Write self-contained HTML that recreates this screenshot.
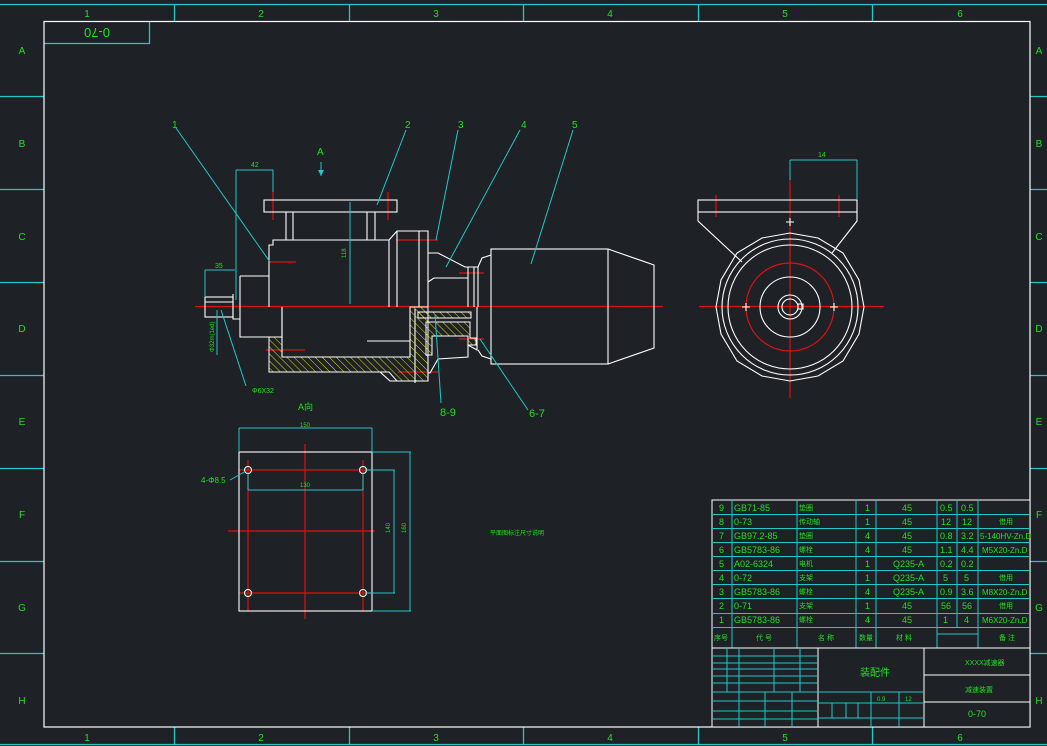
<!DOCTYPE html>
<html><head><meta charset="utf-8"><style>
html,body{margin:0;padding:0;background:#1e2126;}
svg{display:block}
text{font-family:"Liberation Sans","Noto Sans CJK SC",sans-serif;fill:#22e022;}
</style></head><body>
<svg width="1047" height="746" viewBox="0 0 1047 746" xmlns="http://www.w3.org/2000/svg">
<rect width="1047" height="746" fill="#1e2126"/>
<!-- outer cyan frame -->
<g stroke="#22c8c8" stroke-width="1.3" fill="none">
<line x1="0" y1="4.5" x2="1047" y2="4.5"/>
<line x1="0" y1="744.5" x2="1047" y2="744.5"/>
<path d="M174.5 4V21M349.5 4V21M523.5 4V21M698.5 4V21M872.5 4V21"/>
<path d="M174.5 727V745M349.5 727V745M523.5 727V745M698.5 727V745M872.5 727V745"/>
<path d="M0 96.5H44M0 189.5H44M0 282.5H44M0 375.5H44M0 468.5H44M0 561.5H44M0 653.5H44"/>
<path d="M1030 96.5H1047M1030 189.5H1047M1030 282.5H1047M1030 375.5H1047M1030 468.5H1047M1030 561.5H1047M1030 653.5H1047"/>
<path d="M44 43.5H149.5V21"/>
</g>
<rect x="44" y="21.5" width="986" height="705.5" fill="none" stroke="#fff" stroke-width="1.2"/>
<g font-size="10" text-anchor="middle">
<text x="87" y="17">1</text><text x="261" y="17">2</text><text x="436" y="17">3</text><text x="610" y="17">4</text><text x="785" y="17">5</text><text x="960" y="17">6</text>
<text x="87" y="741">1</text><text x="261" y="741">2</text><text x="436" y="741">3</text><text x="610" y="741">4</text><text x="785" y="741">5</text><text x="960" y="741">6</text>
<text x="22" y="54">A</text><text x="22" y="147">B</text><text x="22" y="240">C</text><text x="22" y="332">D</text><text x="22" y="425">E</text><text x="22" y="518">F</text><text x="22" y="611">G</text><text x="22" y="704">H</text>
<text x="1039" y="54">A</text><text x="1039" y="147">B</text><text x="1039" y="240">C</text><text x="1039" y="332">D</text><text x="1039" y="425">E</text><text x="1039" y="518">F</text><text x="1039" y="611">G</text><text x="1039" y="704">H</text>
<text x="97" y="38" font-size="13" transform="rotate(180 97 33)">0-70</text>
</g>

<!-- centerlines -->
<g stroke="#e01010" stroke-width="1.2">
<line x1="195" y1="306.5" x2="663" y2="306.5"/>
<line x1="270" y1="262" x2="296" y2="262"/>
<line x1="266" y1="350" x2="305" y2="350"/>
<line x1="273" y1="192" x2="273" y2="220"/><line x1="388" y1="192" x2="388" y2="220"/>
<line x1="396" y1="240" x2="438" y2="240"/>
<line x1="459" y1="273" x2="484" y2="273"/>
<line x1="459" y1="339" x2="484" y2="339"/>
<line x1="398" y1="372" x2="438" y2="372"/>
<!-- right view -->
<line x1="790" y1="180" x2="790" y2="398"/>
<line x1="699" y1="306.5" x2="884" y2="306.5"/>
<line x1="716" y1="195" x2="716" y2="217"/><line x1="839" y1="195" x2="839" y2="217"/>
<!-- A view -->
<line x1="248" y1="460" x2="248" y2="611"/><line x1="363" y1="460" x2="363" y2="611"/>
<line x1="239" y1="470" x2="372" y2="470"/><line x1="239" y1="593" x2="372" y2="593"/>
<line x1="305" y1="444" x2="305" y2="619"/><line x1="228" y1="531" x2="375" y2="531"/>
</g>
<circle cx="790" cy="307" r="44" fill="none" stroke="#e01010" stroke-width="1.2"/>

<!-- main view white -->
<g stroke="#fff" stroke-width="1.1" fill="none">
<rect x="264" y="200" width="133" height="12"/>
<path d="M286 212V240M293 212V240M367 212V240M375 212V240"/>
<path d="M269 307V245H273V240H389V307"/>
<path d="M389 240L397 231H428V307M397 231V307M419 231V307"/>
<path d="M428 253H438L465 267H468V307M428 282L434 278H468"/>
<path d="M468 267H478V307M474 267V307"/>
<path d="M478 267L482 258L491 255M478 350L482 356L491 359"/>
<rect x="491" y="249" width="117" height="115"/>
<path d="M608 249L654 265V348L608 364"/>
<rect x="205" y="297" width="28" height="20"/>
<path d="M233 294V319H240M240 276H269M240 276V337H282V307M205 302H233"/>
<path d="M282 307V357H410V307M410 307V357"/>
<path d="M477 307V350L468 345V357L438 359L430 373H428V357M428 373V381H390L380 372"/>
<path d="M367 341H410M415 309V383"/>
<path d="M790 180"/>
</g>
<!-- hatched -->
<defs><pattern id="h" width="5" height="5" patternUnits="userSpaceOnUse" patternTransform="rotate(-45)"><line x1="0" y1="0" x2="0" y2="5" stroke="#e8e020" stroke-width="1"/></pattern></defs>
<g fill="url(#h)" stroke="#fff" stroke-width="1">
<path d="M269 337H282V357H410V307H428V381H397L389 372H269Z"/>
<path d="M418 312H471V318H418Z"/>
<path d="M426 322H470V338H476V345H468V336H432V355H426Z"/>
</g>

<!-- right view white -->
<g stroke="#fff" stroke-width="1.1" fill="none">
<rect x="698" y="200" width="159" height="12"/>
<path d="M698 212V221L742 262M857 212V221L832 253"/>
<polygon points="790,233 818,238 843,253 859,280 864,307 859,334 843,361 818,376 790,381 762,376 737,361 721,334 716,307 721,280 737,253 762,238"/>
<circle cx="790" cy="307" r="68"/>
<circle cx="790" cy="307" r="62"/>
<circle cx="790" cy="307" r="30"/>
<circle cx="790" cy="307" r="12"/>
<circle cx="790" cy="307" r="8"/>
<rect x="798" y="304" width="5" height="5"/>
<path d="M786 222H794M790 218V226M742 307H750M746 303V311M830 307H838M834 303V311"/>
</g>

<!-- A view white -->
<g stroke="#fff" stroke-width="1.1" fill="none">
<rect x="239" y="452" width="133" height="159"/>
<circle cx="248" cy="470" r="3.5"/><circle cx="363" cy="470" r="3.5"/>
<circle cx="248" cy="593" r="3.5"/><circle cx="363" cy="593" r="3.5"/>
</g>

<!-- cyan dims / leaders -->
<g stroke="#22c8c8" stroke-width="1" fill="none">
<path d="M236 170H273M236 170V300M273 170V192"/>
<path d="M205 270H235M205 270V297"/>
<path d="M350 202V304"/>
<path d="M217 310V355"/>
<path d="M176 128L270 262"/>
<path d="M406 130L377 205"/>
<path d="M458 130L436 240"/>
<path d="M520 130L446 267"/>
<path d="M573 130L531 264"/>
<path d="M221 310L246 386"/>
<path d="M435 314L441 403"/>
<path d="M480 339L528 410"/>
<path d="M790 160H857M790 160V180M857 160V200"/>
<path d="M239 428H372M239 428V452M372 428V452"/>
<path d="M248 490H363M248 473V490M363 473V490"/>
<path d="M372 452H411M410 452V611M372 611H411"/>
<path d="M365 470H395M394 470V593M365 593H395"/>
<path d="M230 480L246 471"/>
</g>
<path d="M321 162V176" stroke="#22c8c8"/><path d="M318 170L321 176L324 170Z" fill="#22c8c8"/>

<g font-size="10">
<text x="172" y="128">1</text><text x="405" y="128">2</text><text x="458" y="128">3</text><text x="521" y="128">4</text><text x="572" y="128">5</text>
<text x="317" y="155">A</text>
<text x="251" y="167" font-size="7">42</text>
<text x="215" y="268" font-size="7">35</text>
<text x="252" y="393" font-size="7">Φ6X32</text>
<text x="298" y="410" font-size="9">A向</text>
<text x="440" y="416" font-size="11">8-9</text>
<text x="529" y="417" font-size="11">6-7</text>
<text x="818" y="157" font-size="7">14</text>
<text x="300" y="427" font-size="6">150</text>
<text x="300" y="487" font-size="6">130</text>
<text x="201" y="483" font-size="8">4-Φ8.5</text>
<text x="490" y="535" font-size="6">平面图标注尺寸说明</text>
<text x="346" y="258" font-size="6" transform="rotate(-90 346 258)">118</text>
<text x="390" y="533" font-size="6" transform="rotate(-90 390 533)">140</text>
<text x="406" y="533" font-size="6" transform="rotate(-90 406 533)">160</text>
<text x="214" y="352" font-size="6" transform="rotate(-90 214 352)">Φ32m(1ed)</text>
</g>

<!-- title block -->
<g stroke="#22c8c8" stroke-width="1" fill="none">
<rect x="712" y="500" width="318" height="227" fill="#1e2126" stroke="#fff"/>
<path d="M712 514.5H1030M712 528.5H1030M712 542.5H1030M712 556.5H1030M712 570.5H1030M712 584.5H1030M712 598.5H1030M712 613.5H1030M712 627.5H1030"/>
<path d="M732 500V648M797 500V648M856 500V648M876 500V648M937 500V648M957 500V627M978 500V648M937 634H978"/>
<path d="M712 648H1030" stroke="#fff"/>
<path d="M818 648V727M924 648V727" stroke="#fff"/>
<path d="M924 675H1030M924 702H1030" stroke="#fff"/>
<path d="M818 692H924M818 703H924M818 718H924M871 692V727M899 692V727M832 703V718M846 703V718M858 703V718"/>
<path d="M712 656H818M712 663H818M712 669H818M712 676H818M712 683H818M712 692H818M712 701H818M712 711H818M712 719H818"/>
<path d="M727 648V692M739 648V727M774 648V692M800 648V692M765 692V727M792 692V727"/>
</g>
<g font-size="9">
<text x="719" y="511">9</text><text x="734" y="511">GB71-85</text><text x="865" y="511">1</text><text x="902" y="511">45</text><text x="940" y="511">0.5</text><text x="961" y="511">0.5</text>
<text x="719" y="525">8</text><text x="734" y="525">0-73</text><text x="865" y="525">1</text><text x="902" y="525">45</text><text x="941" y="525">12</text><text x="962" y="525">12</text>
<text x="719" y="539">7</text><text x="734" y="539">GB97.2-85</text><text x="865" y="539">4</text><text x="902" y="539">45</text><text x="940" y="539">0.8</text><text x="961" y="539">3.2</text><text x="980" y="539" font-size="8">5-140HV-Zn.D</text>
<text x="719" y="553">6</text><text x="734" y="553">GB5783-86</text><text x="865" y="553">4</text><text x="902" y="553">45</text><text x="940" y="553">1.1</text><text x="961" y="553">4.4</text><text x="982" y="553" font-size="8">M5X20-Zn.D</text>
<text x="719" y="567">5</text><text x="734" y="567">A02-6324</text><text x="865" y="567">1</text><text x="893" y="567">Q235-A</text><text x="940" y="567">0.2</text><text x="961" y="567">0.2</text>
<text x="719" y="581">4</text><text x="734" y="581">0-72</text><text x="865" y="581">1</text><text x="893" y="581">Q235-A</text><text x="943" y="581">5</text><text x="964" y="581">5</text>
<text x="719" y="595">3</text><text x="734" y="595">GB5783-86</text><text x="865" y="595">4</text><text x="893" y="595">Q235-A</text><text x="940" y="595">0.9</text><text x="961" y="595">3.6</text><text x="982" y="595" font-size="8">M8X20-Zn.D</text>
<text x="719" y="609">2</text><text x="734" y="609">0-71</text><text x="865" y="609">1</text><text x="902" y="609">45</text><text x="941" y="609">56</text><text x="962" y="609">56</text>
<text x="719" y="623">1</text><text x="734" y="623">GB5783-86</text><text x="865" y="623">4</text><text x="902" y="623">45</text><text x="943" y="623">1</text><text x="964" y="623">4</text><text x="982" y="623" font-size="8">M6X20-Zn.D</text>
<g font-size="7"><text x="799" y="510">垫圈</text><text x="799" y="524">传动轴</text><text x="799" y="538">垫圈</text><text x="799" y="552">螺栓</text><text x="799" y="566">电机</text><text x="799" y="580">支架</text><text x="799" y="594">螺栓</text><text x="799" y="608">支架</text><text x="799" y="622">螺栓</text>
<text x="999" y="524">借用</text><text x="999" y="580">借用</text><text x="999" y="608">借用</text>
<text x="714" y="640">序号</text><text x="756" y="640">代 号</text><text x="818" y="640">名 称</text><text x="859" y="640">数量</text><text x="896" y="640">材 料</text><text x="999" y="640">备 注</text>
<text x="860" y="676" font-size="10">装配件</text><text x="965" y="665">XXXX减速器</text><text x="965" y="692">减速装置</text><text x="968" y="717" font-size="9">0-70</text>
<text x="877" y="701" font-size="6">0.9</text><text x="905" y="701" font-size="6">12</text></g>
</g>
</svg>
</body></html>
